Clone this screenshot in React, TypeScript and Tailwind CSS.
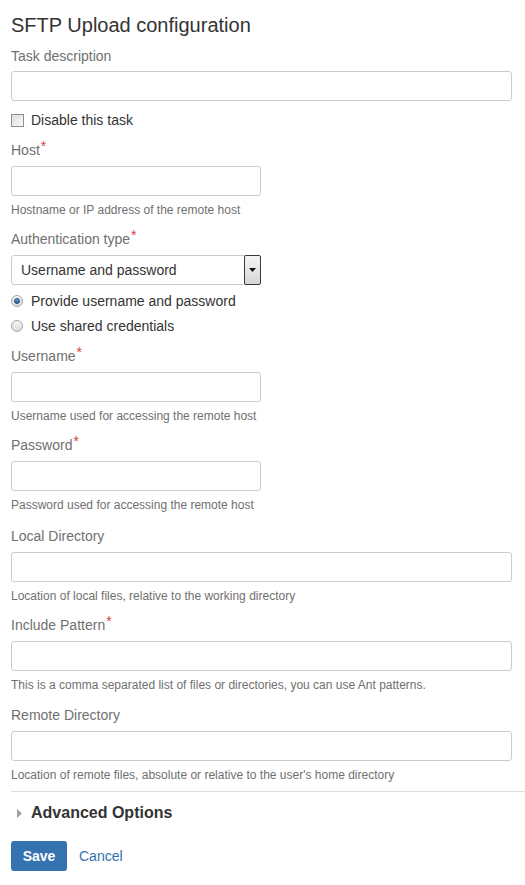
import type { ReactNode } from 'react'

function Label({ children, required }: { children: ReactNode; required?: boolean }) {
  return (
    <div className="text-[14px] leading-[20px] text-[#707070] mb-[6px]">
      {children}
      {required && <span className="text-[#d04437] relative -top-[4px] ml-[1px]">*</span>}
    </div>
  )
}

function Help({ children }: { children: ReactNode }) {
  return <div className="text-[12px] leading-[16px] text-[#707070] mt-[6px]">{children}</div>
}

function TextInput({ short }: { short?: boolean }) {
  return (
    <input
      type="text"
      className={short
        ? 'block w-[250px] h-[30px] border border-[#cccccc] rounded-[3px] bg-white px-[8px] outline-none'
        : 'block w-[501px] h-[30px] border border-[#cccccc] rounded-[3px] bg-white px-[8px] outline-none'}
    />
  )
}

function Field({ label, required, short, help, className }: { label: string; required?: boolean; short?: boolean; help?: string; className?: string }) {
  return (
    <div className={className}>
      <Label required={required}>{label}</Label>
      <TextInput short={short} />
      {help && <Help>{help}</Help>}
    </div>
  )
}

function Radio({ checked, children }: { checked?: boolean; children: ReactNode }) {
  return (
    <div className="flex items-center h-[20px]">
      <span className="w-[12px] h-[12px] rounded-full border border-[#a6a6a6] bg-gradient-to-b from-[#f4f4f4] to-[#dcdcdc] flex items-center justify-center">
        {checked && <span className="w-[6px] h-[6px] rounded-full bg-gradient-to-b from-[#6aa8e0] to-[#1d5c9a] border border-[#1b4f80]" />}
      </span>
      <span className="ml-[8px] text-[14px] text-[#333333]">{children}</span>
    </div>
  )
}

export default function App() {
  return (
    <div className="bg-white min-h-[885px] px-[11px] pt-[13px] font-['Liberation_Sans',Arial,sans-serif] text-[#333333]">
      <h1 className="text-[20px] leading-[24px] text-[#333333]">SFTP Upload configuration</h1>

      <div className="mt-[9px]">
        <div className="text-[14px] leading-[20px] text-[#707070] mb-[5px]">Task description</div>
        <TextInput />
      </div>

      <div className="flex items-center h-[20px] mt-[9px]">
        <span className="w-[13px] h-[13px] border border-[#8f8f8f] bg-gradient-to-br from-[#dedede] to-[#f8f8f8]" />
        <span className="ml-[7px] text-[14px] text-[#333333]">Disable this task</span>
      </div>

      <Field className="mt-[10px]" label="Host" required short help="Hostname or IP address of the remote host" />

      <div className="mt-[11px]">
        <Label required>Authentication type</Label>
        <div className="flex w-[250px] h-[30px] border border-[#cccccc] rounded-[3px] bg-white">
          <span className="flex-1 pl-[9px] text-[14px] leading-[28px] text-[#333333]">Username and password</span>
          <span className="w-[17px] h-[30px] -mt-px -mr-px border border-[#3a3a3a] rounded-[2px] bg-gradient-to-b from-[#f6f6f6] to-[#d6d6d6] flex items-center justify-center">
            <svg width="7" height="4" viewBox="0 0 7 4"><path d="M0 0h7L3.5 4z" fill="#111" /></svg>
          </span>
        </div>
      </div>

      <div className="mt-[6px] flex flex-col gap-[5px]">
        <Radio checked>Provide username and password</Radio>
        <Radio>Use shared credentials</Radio>
      </div>

      <Field className="mt-[10px]" label="Username" required short help="Username used for accessing the remote host" />
      <Field className="mt-[11px]" label="Password" required short help="Password used for accessing the remote host" />
      <Field className="mt-[13px]" label="Local Directory" help="Location of local files, relative to the working directory" />
      <Field className="mt-[11px]" label="Include Pattern" required help="This is a comma separated list of files or directories, you can use Ant patterns." />
      <Field className="mt-[12px]" label="Remote Directory" help="Location of remote files, absolute or relative to the user's home directory" />

      <div className="mt-[8px] -mr-[11px] border-t border-[#dddddd]" />

      <div className="mt-[11px] flex items-center h-[20px]">
        <svg width="5" height="9" viewBox="0 0 5 9" className="ml-[6px]"><path d="M0 0l5 4.5L0 9z" fill="#a0a0a0" /></svg>
        <span className="ml-[9px] text-[16px] font-bold text-[#333333]">Advanced Options</span>
      </div>

      <div className="mt-[18px] flex items-center">
        <button className="w-[56px] h-[30px] rounded-[3px] bg-[#3572b0] text-white text-[14px] font-bold">Save</button>
        <a className="ml-[12px] text-[14px] text-[#3572b0]">Cancel</a>
      </div>
    </div>
  )
}
